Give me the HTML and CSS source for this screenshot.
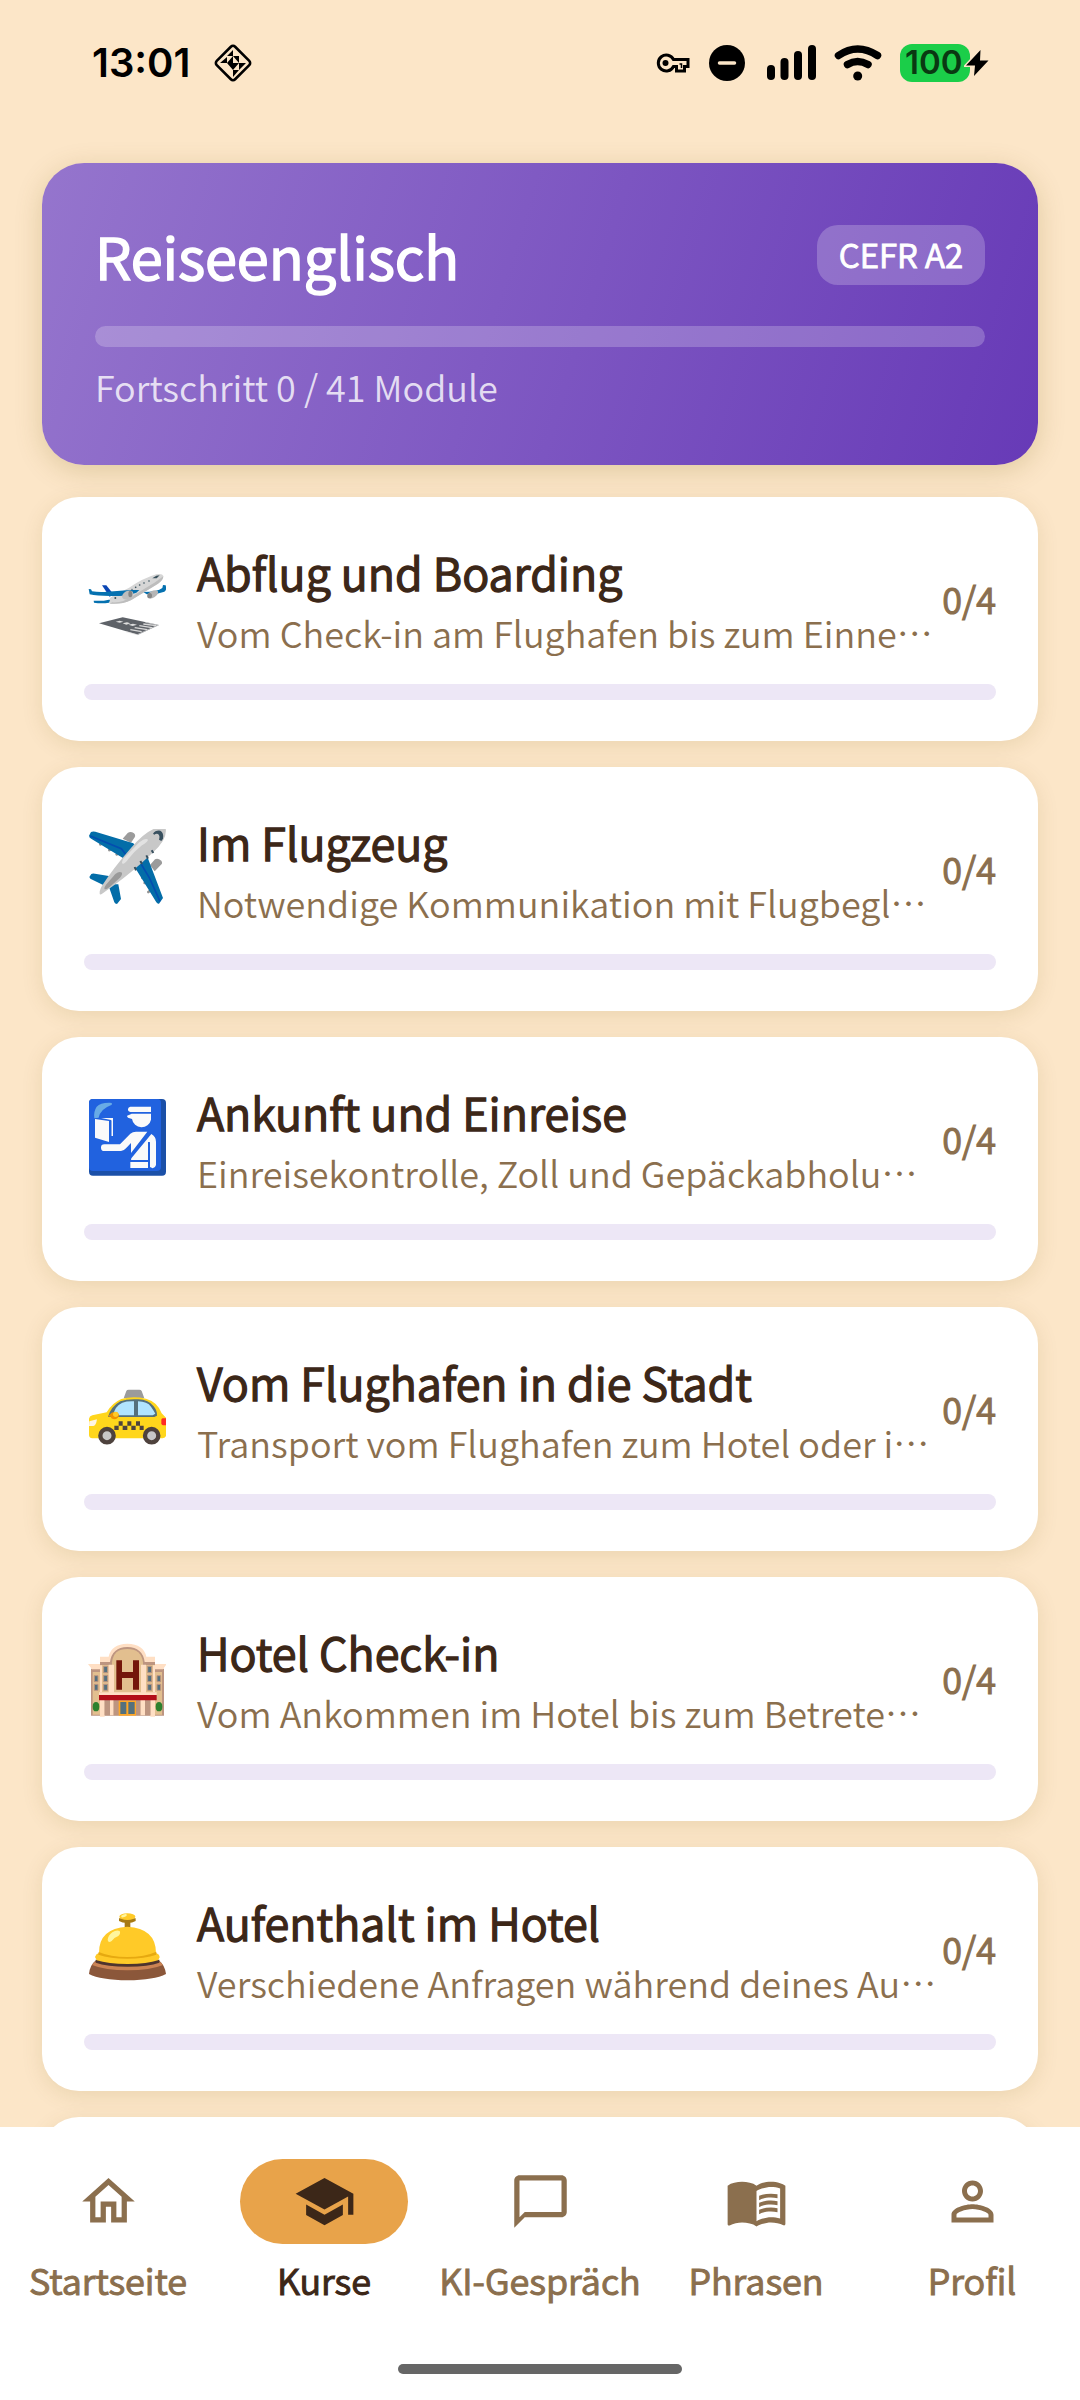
FILE: index.html
```html
<!DOCTYPE html>
<html lang="de">
<head>
<meta charset="utf-8">
<meta name="viewport" content="width=device-width, initial-scale=1">
<title>Reiseenglisch</title>
<link rel="stylesheet" href="styles.css">
</head>
<body>
<div class="app">
  <header class="status">
    <div class="status-group">
      <time class="clock">13:01</time>
      <svg class="diamond" viewBox="0 0 38 38" width="38" height="38" aria-hidden="true">
        <rect x="6" y="6" width="26" height="26" rx="3" transform="rotate(45 19 19)" fill="none" stroke="#000" stroke-width="2.6"/>
        <path d="M19 6v6h-6zM19 12v7h-6zM19 12h6v7zM13 13v6H6zM13 19h6v7zM19 26v-7l6 0zM19 26h6l-6 7zM25 19h7l-7 7z"/>
      </svg>
    </div>
    <div class="status-group status-icons">
      <svg viewBox="0 0 36 22" width="36" height="22" aria-hidden="true">
        <path d="M19 7.500H33V14.500H29.500V19H21.500V14.500H18.500A8 8 0 1 1 18.500 7.500Z" fill="none" stroke="#000" stroke-width="3"/><circle cx="10.500" cy="11" r="3"/><path d="M24.500 12h2v4" fill="none" stroke="#000" stroke-width="1.500"/>
      </svg>
      <svg class="dnd" viewBox="0 0 36 36" width="36" height="36" aria-hidden="true">
        <circle cx="18" cy="18" r="18"/><path d="M10.500 18h15" stroke="#fce6c8" stroke-width="3.500" stroke-linecap="round"/>
      </svg>
      <svg class="signal" viewBox="0 0 49 36" width="49" height="36" aria-hidden="true">
        <rect y="20" width="8" height="15" rx="4"/><rect x="13.500" y="13" width="8" height="22" rx="4"/><rect x="27" y="6" width="8" height="29" rx="4"/><rect x="41" y="0" width="8" height="35" rx="4"/>
      </svg>
      <svg class="wifi" viewBox="0 0 48 36" width="48" height="36" aria-hidden="true">
        <g fill="none" stroke="#000" stroke-width="7.500" stroke-linecap="round"><path d="M4.500 10.500Q23.500-2.500 43.500 10.500"/><path d="M13.500 19.500Q23.500 13.500 34 19.500"/></g><circle cx="23.700" cy="31" r="4.500"/>
      </svg>
      <div class="battery">
        <span class="battery-level">100</span>
        <svg class="bolt" viewBox="0 0 26 30" width="26" height="30" aria-hidden="true"><path d="M16.500 2L2 17.500h9L10 28 24.500 12.500h-8.500z" stroke="#fce6c8" stroke-width="3" paint-order="stroke"/></svg>
      </div>
    </div>
  </header>

  <main class="content">
    <section class="hero">
      <div class="hero-head">
        <h1 class="hero-title">Reiseenglisch</h1>
        <span class="badge">CEFR A2</span>
      </div>
      <div class="hero-bar" role="progressbar" aria-label="Fortschritt" aria-valuenow="0" aria-valuemax="41"></div>
      <p class="hero-text">Fortschritt 0 / 41 Module</p>
    </section>

    <ul class="courses">
      <li class="card">
        <div class="card-row">
          <svg class="emoji" viewBox="24 -3 234 234" aria-hidden="true">
            <path d="M57 190L128 172 237 195 174 224Z" fill="#5e6268"/>
            <path d="M196 187l38 8-62 29-34-9" fill="none" stroke="#dedede" stroke-width="2"/>
            <path d="M107 185l12-3 11 3-11 3zM128 190l13-3 10 3-12 4zM145 194l14-3 12 3-13 4z" fill="#dedede"/>
            <path d="M190 192l38 5M178 197l38 6M164 203l38 6M151 209l34 6" stroke="#d8d8d8" stroke-width="4"/>
            <path d="M190 96Q232 96 247 84L249 75 257 76Q261 91 253 95 230 104 200 103Z" fill="#0571b0"/>
            <path d="M66 76L79 76 95 96 90 112Z" fill="#0a46b4"/>
            <path d="M89 131Q82 118 97 109L146 84Q190 54 229 43 247 39 250 48 251 59 234 71L154 120Q125 134 89 131Z" fill="#d6d6d6"/>
            <path d="M97 127Q130 129 164 104L223 68Q240 57 250 49 250 60 234 71L154 120Q125 134 89 131Z" fill="#bdbdbd"/>
            <path d="M26 87L33 88 36 94Q58 97 82 95L150 90 178 90 169 98Q135 110 90 108 50 108 29 103Z" fill="#0571b0"/>
            <path d="M41 122Q67 124 86 119L90 120 87 128Q65 131 42 128Z" fill="#0571b0"/>
            <path d="M217 55l12-8 10-1-9 9z" fill="#38505c"/>
            <g fill="#38505c"><circle cx="207" cy="63" r="2.500"/><circle cx="192" cy="69" r="2.500"/><circle cx="179" cy="75" r="2.500"/><circle cx="167" cy="82" r="2.500"/><circle cx="156" cy="88" r="2"/><circle cx="106" cy="114" r="3"/></g>
            <ellipse cx="143" cy="105" rx="18" ry="12" transform="rotate(-30 143 105)" fill="#bdbdbd"/><ellipse cx="151" cy="102" rx="6" ry="10" fill="#858585"/>
            <ellipse cx="218" cy="103" rx="18" ry="10" transform="rotate(-30 218 103)" fill="#b5b5b5"/><ellipse cx="209" cy="107" rx="7" ry="8" fill="#858585"/>
          </svg>
          <div class="card-text"><h2 class="card-title">Abflug und Boarding</h2><p class="card-sub">Vom Check-in am Flughafen bis zum Einne<span class="more">…</span></p></div>
          <span class="count">0/4</span>
        </div>
        <div class="bar" role="progressbar" aria-label="Abflug und Boarding" aria-valuenow="0" aria-valuemax="4"></div>
      </li>
      <li class="card">
        <div class="card-row">
          <svg class="emoji" viewBox="84 119 234 234" aria-hidden="true">
            <g fill="#9b9b9b"><path d="M188 148L203 131Q211 125 221 131 228 137 224 144L213 160Z"/><path d="M270 227L285 210Q293 205 304 214 309 221 303 226L284 246Z"/></g>
            <path d="M121 165l8-4M148 182l8-3M170 195l8-5M252 256l8 7M254 281l7 0M265 308l6-4M247 256v10" stroke="#929292" stroke-width="8" stroke-linecap="round"/>
            <path d="M87 139L93 128Q98 125 106 127L220 162 250 198 262 202 309 326 297 343Q292 344 289 339L228 240 190 207 96 150Q87 145 87 139Z" fill="#036da8"/>
            <path d="M88 263L94 254Q98 251 105 253L160 262 150 285 175 285 183 329 171 344Q165 344 163 339L148 296 128 286 91 268Z" fill="#036da8"/>
            <path d="M91 140L184 178 201 200M244 225L269 267 300 336" fill="none" stroke="#034db0" stroke-width="5"/>
            <path d="M119 310Q119 299 131 282 158 239 211 178 253 128 288 116 310 110 317 117 323 151 278 190 222 244 160 289 133 308 124 315 118 317 119 310Z" fill="#c8c8c8"/>
            <path d="M135 300Q130 298 138 286L166 254Q178 244 186 250 188 258 175 270L150 292Q139 301 135 300Z" fill="#9a9a9a"/>
            <path d="M190 223Q182 224 190 208L238 159Q257 144 264 151 263 158 246 168Q222 187 205 209 196 222 190 223Z" fill="#e2e2e2"/>
            <path d="M279 133Q286 122 301 124 312 130 309 148L304 155 297 151Q301 139 294 134 288 132 283 136Z" fill="#38505f"/>
            <path d="M275 183l5 8M259 198l5 10M241 215l5 9M224 233l4 10" stroke="#38505f" stroke-width="6"/>
          </svg>
          <div class="card-text"><h2 class="card-title">Im Flugzeug</h2><p class="card-sub">Notwendige Kommunikation mit Flugbegl<span class="more">…</span></p></div>
          <span class="count">0/4</span>
        </div>
        <div class="bar" role="progressbar" aria-label="Im Flugzeug" aria-valuenow="0" aria-valuemax="4"></div>
      </li>
      <li class="card">
        <div class="card-row">
          <svg class="emoji" viewBox="84 930 234 234" aria-hidden="true">
            <rect x="87" y="930" width="231" height="230" rx="12" fill="#1b50a8"/>
            <path d="M99 930H292Q303 930 303 941V1133Q303 1146 290 1146H99Q87 1146 87 1134V942Q87 930 99 930Z" fill="#2162df"/>
            <path d="M103 988Q100 968 110 953 122 940 150 941 160 942 154 948 121 960 116 986Z" fill="#68abe6"/>
            <g fill="#fafafa"><path d="M105 990L147 996V1059L105 1046Z"/><path d="M123 987H159V1041H153V993Z"/><path d="M211 953H273V969H211Q203 967 204 960 205 954 211 953Z"/><path d="M201 982Q201 979 207 978L215 974H273V992A29 29 0 0 1 216 990L204 986Z"/><path d="M133 1066H180L211 1034Q218 1028 228 1028H262L213 1092V1062L198 1078Q191 1086 183 1086H133A10 10 0 0 1 133 1066Z"/><path d="M274 1035Q288 1043 288 1058V1128Q286 1137 278 1138L270 1134V1060L264 1059V1113H213L214 1108Z"/><path d="M211 1119H264V1137H211Z"/></g>
            <path d="M267 1060V1138" stroke="#2162df" stroke-width="4"/><path d="M153 994v52" stroke="#2162df" stroke-width="3"/>
          </svg>
          <div class="card-text"><h2 class="card-title">Ankunft und Einreise</h2><p class="card-sub">Einreisekontrolle, Zoll und Gepäckabholu<span class="more">…</span></p></div>
          <span class="count">0/4</span>
        </div>
        <div class="bar" role="progressbar" aria-label="Ankunft und Einreise" aria-valuenow="0" aria-valuemax="4"></div>
      </li>
      <li class="card">
        <div class="card-row">
          <svg class="emoji" viewBox="84 62 234 234" aria-hidden="true">
            <path d="M191 150L199 128Q200 124 206 124H238Q243 124 245 128L253 150Z" fill="#9b9b9b"/>
            <path d="M87 211Q88 203 97 201L140 192Q156 164 184 152 219 142 258 151 293 161 305 195L318 208V263Q316 269 308 270H97Q88 270 87 261Z" fill="#ffd61c"/>
            <path d="M144 205Q154 174 181 159 202 151 235 153 266 154 281 174 292 188 291 202L283 206H146Z" fill="#54707d"/>
            <path d="M160 200Q164 174 187 163 202 158 222 159V201H168ZM234 159Q262 160 273 175 282 188 286 196L278 201H234Z" fill="#b1e4ff"/>
            <path d="M144 204L155 193Q174 187 177 200 176 212 162 213 153 211 152 205Z" fill="#f09300"/><circle cx="167" cy="198" r="8" fill="#ffca28"/>
            <path d="M88 219L111 213Q108 233 100 233H87Z" fill="#fff5e4"/><path d="M304 214Q305 210 309 210H318V231H309Q305 230 304 226Z" fill="#ff2b23"/>
            <path d="M176 219h12v13h14v-13h12v13h14v-13h12v13h11v13h-12v-13h-12v13h-13v-13h-12v13h-14v-13h-12v13h-13v-13h13z" fill="#4e423d"/>
            <g fill="#c7c7c7" stroke="#4e423d" stroke-width="13"><circle cx="141" cy="262" r="20"/><circle cx="275" cy="262" r="20"/></g>
          </svg>
          <div class="card-text"><h2 class="card-title">Vom Flughafen in die Stadt</h2><p class="card-sub">Transport vom Flughafen zum Hotel oder i<span class="more">…</span></p></div>
          <span class="count">0/4</span>
        </div>
        <div class="bar" role="progressbar" aria-label="Vom Flughafen in die Stadt" aria-valuenow="0" aria-valuemax="4"></div>
      </li>
      <li class="card">
        <div class="card-row">
          <svg class="emoji" viewBox="84 873 234 234" aria-hidden="true">
            <path d="M93 962H312V1103H93Z" fill="#bd9580"/><path d="M98 972H120V1100H98ZM285 972H306V1100H285Z" fill="#e2bf8f"/>
            <path d="M84 948H120V964H96ZM320 948H285V964H309Z" fill="#ffdfc4"/>
            <path d="M120 944H285V1034H120Z" fill="#e2bf8f"/><path d="M120 926H146Q154 888 202 887 251 888 259 926H285V943H120Z" fill="#ffdfc4"/>
            <path d="M120 942H150Q156 898 202 897 248 898 254 942H285V951H120Z" fill="#bd9580"/>
            <path d="M156 1034V943Q160 903 202 903 244 903 249 943V1034Z" fill="#e2bf8f"/>
            <path d="M120 952h6v80h-6zM146 950h16v84h-16zM243 950h15v84h-15zM279 952h6v80h-6z" fill="#ffdfc4"/>
            <path d="M169 937h17v35h33v-35h18v88h-18v-35h-33v35h-17z" fill="#74160b"/>
            <g fill="#54707d" stroke="#bd9580" stroke-width="3"><path d="M131 955h12v19h-12zM131 982h12v19h-12zM131 1009h12v18h-12zM263 955h12v19h-12zM263 982h12v19h-12zM263 1009h12v18h-12zM103 983h11v18h-11zM103 1009h11v18h-11zM291 983h11v18h-11zM291 1009h11v18h-11z"/></g>
            <path d="M117 1033H290V1042H117ZM120 1056h14v50h-14zM150 1056h11v46h-11zM241 1056h14v46h-14zM271 1056h14v50h-14z" fill="#ffdfc4"/>
            <path d="M134 1056h16v46h-16zM161 1056h15v46h-15zM229 1056h12v46h-12zM255 1056h16v46h-16z" fill="#bd9580"/><path d="M117 1041H290V1057H117Z" fill="#b20e18"/>
            <path d="M176 1058H228V1103H176Z" fill="#ffa726"/><path d="M181 1062h18v36h-18zM205 1062h19v36h-19z" fill="#54707d"/>
            <ellipse cx="108" cy="1076" rx="10" ry="14" fill="#2d812d"/><ellipse cx="297" cy="1076" rx="10" ry="14" fill="#2d812d"/>
          </svg>
          <div class="card-text"><h2 class="card-title">Hotel Check-in</h2><p class="card-sub">Vom Ankommen im Hotel bis zum Betrete<span class="more">…</span></p></div>
          <span class="count">0/4</span>
        </div>
        <div class="bar" role="progressbar" aria-label="Hotel Check-in" aria-valuenow="0" aria-valuemax="4"></div>
      </li>
      <li class="card">
        <div class="card-row">
          <svg class="emoji" viewBox="84 94 234 234" aria-hidden="true">
            <path d="M87 289Q89 263 106 249H298Q315 263 318 289 283 307 203 308 122 307 87 289Z" fill="#8b573a"/>
            <path d="M96 262Q103 252 110 250H294Q302 252 309 262 271 278 203 278 135 278 96 262Z" fill="#cb8354"/>
            <path d="M107 246H298V255Q266 267 203 267 140 267 107 255Z" fill="#4e342e"/>
            <path d="M194 130H211V151H194Z" fill="#a77a13"/>
            <path d="M105 238Q108 228 117 226 116 152 202 147 288 152 288 226 298 229 299 239L294 248Q263 259 203 259 143 259 110 248Z" fill="#ffca28"/>
            <path d="M116 223Q151 238 202 238 254 238 289 222V231Q254 243 202 243 150 243 115 231Z" fill="#e6a910"/>
            <path d="M177 122H227V130Q218 136 202 136 186 136 177 130Z" fill="#a77a13"/><ellipse cx="202" cy="117" rx="24" ry="10" fill="#ffca28"/><ellipse cx="192" cy="114" rx="9" ry="4" transform="rotate(-20 192 114)" fill="#fff59d"/>
            <path d="M143 187Q144 174 157 164 169 156 179 160 183 168 175 175 162 179 155 190 145 197 143 187Z" fill="#fff59d"/>
          </svg>
          <div class="card-text"><h2 class="card-title">Aufenthalt im Hotel</h2><p class="card-sub">Verschiedene Anfragen während deines Au<span class="more">…</span></p></div>
          <span class="count">0/4</span>
        </div>
        <div class="bar" role="progressbar" aria-label="Aufenthalt im Hotel" aria-valuenow="0" aria-valuemax="4"></div>
      </li>
      <li class="card"></li>
    </ul>
  </main>

  <nav class="tabs">
    <div class="tab-list">
      <a class="tab" href="#start"><span class="tab-icon"><svg viewBox="0 0 24 24"><path d="M12 5.690l5 4.500V18h-2v-6H9v6H7v-7.810l5-4.500M12 3L2 12h3v8h6v-6h2v6h6v-8h3L12 3z"/></svg></span>Startseite</a>
      <a class="tab tab-active" href="#kurse" aria-current="page"><span class="tab-icon"><svg viewBox="0 0 24 24"><path d="M5 13.180v4L12 21l7-3.820v-4L12 17l-7-3.820zM12 3L1 9l11 6 9-4.910V17h2V9L12 3z"/></svg></span>Kurse</a>
      <a class="tab" href="#gespraech"><span class="tab-icon"><svg viewBox="0 0 24 24"><path d="M20 2H4c-1.100 0-2 .900-2 2v18l4-4h14c1.100 0 2-.900 2-2V4c0-1.100-.900-2-2-2zm0 14H6l-2 2V4h16v12z"/></svg></span>KI-Gespräch</a>
      <a class="tab" href="#phrasen"><span class="tab-icon"><svg viewBox="0 0 24 24"><path d="M21 5c-1.110-.350-2.330-.500-3.500-.500-1.950 0-4.050.400-5.500 1.500-1.450-1.100-3.550-1.500-5.500-1.500S2.450 4.900 1 6v14.650c0 .250.250.500.500.500.100 0 .150-.050.250-.050C3.100 20.450 5.050 20 6.500 20c1.950 0 4.050.400 5.500 1.500 1.350-.850 3.800-1.500 5.500-1.500 1.650 0 3.350.300 4.750 1.050.100.050.150.050.250.050.250 0 .500-.250.500-.500V6c-.600-.450-1.250-.750-2-1zm0 13.500c-1.100-.350-2.300-.500-3.500-.500-1.700 0-4.150.650-5.500 1.500V8c1.350-.850 3.800-1.500 5.500-1.500 1.200 0 2.400.150 3.500.500v11.500z"/><path d="M17.500 10.500c.880 0 1.730.090 2.500.260V9.240c-.790-.150-1.640-.240-2.500-.240-1.700 0-3.240.290-4.500.830v1.660c1.130-.640 2.700-.990 4.500-.990zM13 12.490v1.660c1.130-.640 2.700-.990 4.500-.990.880 0 1.730.090 2.500.260V11.900c-.790-.150-1.640-.240-2.500-.240-1.700 0-3.240.300-4.500.830zM17.500 14.330c-1.700 0-3.240.290-4.500.830v1.660c1.130-.640 2.700-.990 4.500-.990.880 0 1.730.090 2.500.260v-1.520c-.790-.160-1.640-.240-2.500-.240z"/></svg></span>Phrasen</a>
      <a class="tab" href="#profil"><span class="tab-icon"><svg viewBox="0 0 24 24"><path d="M12 5.900c1.160 0 2.100.940 2.100 2.100s-.940 2.100-2.100 2.100S9.900 9.160 9.900 8s.940-2.100 2.100-2.100m0 9c2.970 0 6.100 1.460 6.100 2.100v1.100H5.900V17c0-.640 3.130-2.100 6.100-2.100M12 4C9.790 4 8 5.790 8 8s1.790 4 4 4 4-1.790 4-4-1.790-4-4-4zm0 9c-2.670 0-8 1.340-8 4v3h16v-3c0-2.660-5.330-4-8-4z"/></svg></span>Profil</a>
    </div>
    <div class="handle"></div>
  </nav>
</div>
</body>
</html>
```

FILE: styles.css
```css
* { box-sizing: border-box; margin: 0; padding: 0; }

body {
  background: #fce6c8;
  color: #3c2718;
  font-family: "Noto Sans CJK JP", "Noto Sans", sans-serif;
  font-size: 36px;
  font-weight: 350;
  line-height: 49px;
}

.app { display: flex; flex-direction: column; height: 100vh; }

/* Status bar */
.status {
  display: flex;
  flex: none;
  align-items: center;
  justify-content: space-between;
  padding: 38px 90px 0 92px;
}
.status-group { display: flex; align-items: center; gap: 24px; color: #000; }
.status-icons { gap: 18px; }
.signal { margin-left: 4px; }
.clock { font-family: Inter, sans-serif; font-size: 40px; font-weight: 600; }
.battery {
  position: relative;
  display: flex;
  align-items: center;
  width: 70px;
  height: 38px;
  margin-right: 20px;
  padding-left: 5px;
  border-radius: 12px;
  background: #1bce49;
}
.battery-level { color: #0a3912; font-family: Inter, sans-serif; font-size: 33px; font-weight: 600; }
.bolt { position: absolute; right: -20px; top: 4px; }

/* Scrolling content */
.content {
  flex: 1;
  min-height: 0;
  padding: 76px 42px 0;
  overflow-y: auto;
  scrollbar-width: none;
}

.hero {
  padding: 50px 53px 54px;
  border-radius: 42px;
  background: linear-gradient(107deg, #9575cd, #673ab7);
  box-shadow: 0 6px 28px rgba(110, 90, 0, 0.2);
  color: #fff;
}
.hero-head { display: flex; align-items: center; justify-content: space-between; }
.hero-title { font-size: 58px; font-weight: 350; line-height: 84px; -webkit-text-stroke: 0.03em; }
.badge {
  padding: 5px 22px 6px;
  border-radius: 21px;
  background: rgba(255, 255, 255, 0.22);
  font-size: 33px;
  -webkit-text-stroke: 0.03em;
}
.hero-bar { height: 21px; margin: 29px 0 15px; border-radius: 11px; background: rgba(255, 255, 255, 0.22); }
.hero-text { color: rgba(255, 255, 255, 0.8); }

.courses { display: flex; flex-direction: column; gap: 26px; margin-top: 32px; list-style: none; }
.card {
  min-height: 244px;
  padding: 42px 42px 41px;
  border-radius: 37px;
  background: #fff;
  box-shadow: 0 5px 21px rgba(110, 90, 0, 0.12);
}
.card-row { display: flex; align-items: center; }
.emoji { flex: none; width: 78px; height: 78px; margin: 0 31px 0 4px; }
.card-text { flex: 1; min-width: 0; display: grid; gap: 4px; }
.card-title { font-size: 45px; font-weight: 350; line-height: 65px; -webkit-text-stroke: 0.03em; }
.card-sub { color: #8b6f4e; white-space: nowrap; }
.more { display: inline-block; }
.count { color: #8b6f4e; -webkit-text-stroke: 0.03em; }
.bar { height: 16px; margin-top: 27px; border-radius: 8px; background: #ede7f6; }

/* Bottom navigation */
.tabs { position: relative; flex: none; padding: 32px 0 26px; background: #fff; }
.tab-list { display: grid; grid-template-columns: repeat(5, 1fr); }
.tab {
  display: flex;
  flex-direction: column;
  align-items: center;
  gap: 11px;
  color: #8b6f4e;
  text-decoration: none;
  white-space: nowrap;
  -webkit-text-stroke: 0.03em;
}
.tab-icon {
  display: flex;
  align-items: center;
  justify-content: center;
  width: 168px;
  height: 85px;
  border-radius: 43px;
}
.tab-icon svg { width: 63px; height: 63px; fill: currentColor; }
.tab-active { color: #3c2718; }
.tab-active .tab-icon { background: #e8a34a; }
.handle { width: 284px; height: 10px; margin: 60px auto 0; border-radius: 5px; background: #666; }
```
